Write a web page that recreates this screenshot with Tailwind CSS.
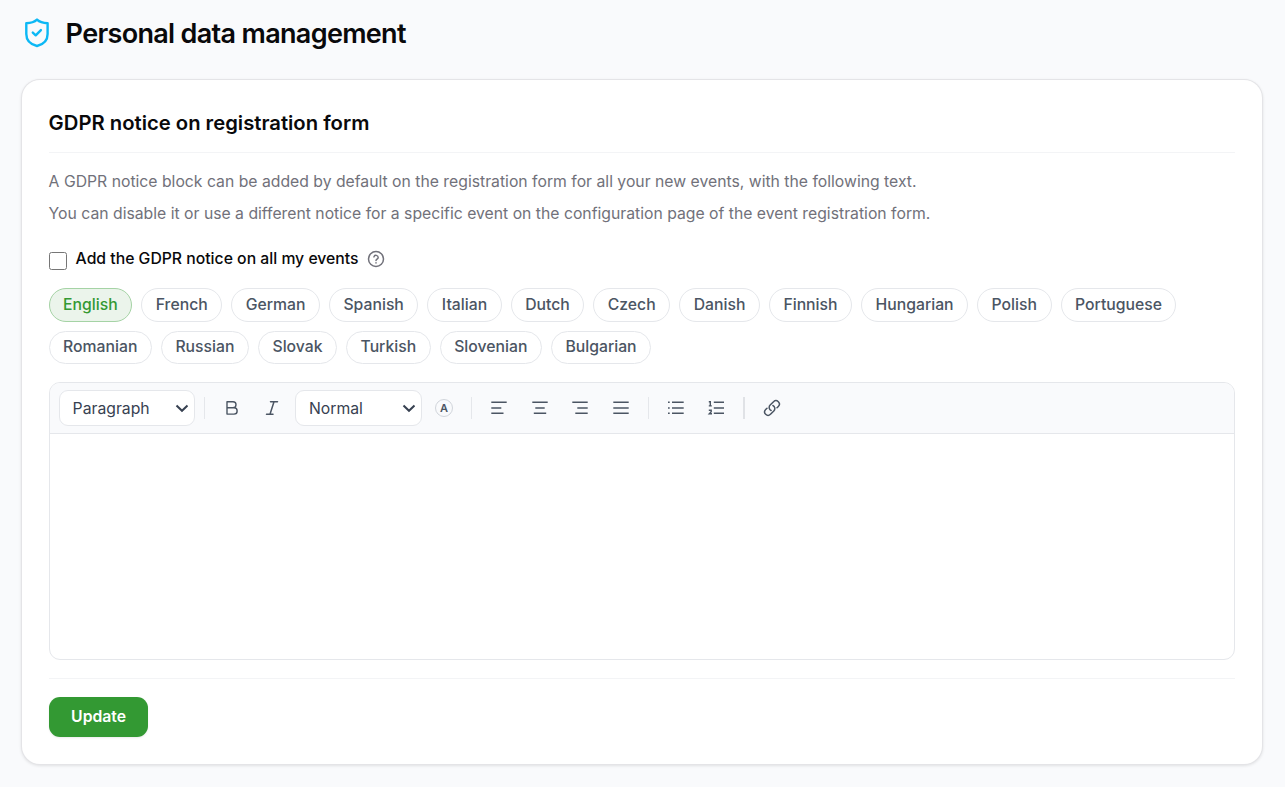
<!DOCTYPE html>
<html lang="en">
<head>
  <meta charset="UTF-8" />
  <meta name="viewport" content="width=device-width, initial-scale=1.0" />
  <title>Personal data management</title>
  <script src="https://cdn.jsdelivr.net/npm/@tailwindcss/browser@4"></script>
</head>
<body class="h-screen overflow-hidden bg-[#f9fafc] px-[21.6px] font-['Inter',sans-serif] text-[15.75px] text-[#09090b]">
  <header class="flex h-[80px] items-start pt-[15px]">
    <svg class="mt-px h-[33px] w-[30px] shrink-0" viewBox="0 0 30 33" fill="none" stroke="#0cb8f5" stroke-width="2.4" stroke-linecap="round" stroke-linejoin="round">
      <path d="M15 3.6C12.3 6.1 8.3 7.1 4.3 7.2V18c0 6.500 4.500 10.500 10.700 12 6.200-1.500 10.600-5.500 10.600-12V7.200c-4-.1-8-1.100-10.600-3.600Z" />
      <path d="m10.800 16.600 2.900 2.700 5.200-5.200" />
    </svg>
    <h1 class="ml-[14px] pt-px text-[27px] leading-[36px] font-semibold tracking-[-0.025em]">Personal data management</h1>
  </header>

  <main class="h-[684.4px] w-[1240.5px] rounded-[18px] bg-white px-[27px] pt-[27px] shadow-[0_0_0_1px_#e4e4e7,0_1px_3px_1px_rgba(0,0,0,0.1)]">
    <h2 class="h-[46px] border-b border-[#f3f4f6] text-[20.25px] leading-[32px] font-semibold">GDPR notice on registration form</h2>

    <div class="mt-[13px] leading-[32px] text-[#71717a]">
      <p>A GDPR notice block can be added by default on the registration form for all your new events, with the following text.</p>
      <p>You can disable it or use a different notice for a specific event on the configuration page of the event registration form.</p>
    </div>

    <label class="mt-[18px] flex h-[22px] items-center">
      <input type="checkbox" class="mt-[3px] h-[18px] w-[18px]" />
      <span class="ml-[9px] font-medium">Add the GDPR notice on all my events</span>
      <svg class="ml-[8px] h-[18px] w-[18px]" viewBox="0 0 18 18" fill="none" stroke="#71717a" stroke-width="1.5" stroke-linecap="round" stroke-linejoin="round">
        <circle cx="9" cy="9" r="7.5" />
        <path d="M6.900 6.900a2.200 2.200 0 0 1 4.300.6c0 1.500-2.200 1.800-2.200 3M9 12.800v.1" />
      </svg>
    </label>

    <div class="mt-[18px] flex flex-wrap gap-[9px] font-medium leading-[22.5px] text-[#4b5563] *:flex *:h-[33.5px] *:rounded-full *:border *:border-[#e5e7eb] *:px-[13.5px] *:pt-[4.5px]">
      <button class="border-[#a5d3a5]! bg-[#ebf4eb] text-[#339933]">English</button>
      <button>French</button>
      <button>German</button>
      <button>Spanish</button>
      <button>Italian</button>
      <button>Dutch</button>
      <button>Czech</button>
      <button>Danish</button>
      <button>Finnish</button>
      <button>Hungarian</button>
      <button>Polish</button>
      <button>Portuguese</button>
      <button>Romanian</button>
      <button>Russian</button>
      <button>Slovak</button>
      <button>Turkish</button>
      <button>Slovenian</button>
      <button>Bulgarian</button>
    </div>

    <!-- Editor -->
    <div class="mt-[18px] h-[278px] w-[1186px] overflow-hidden rounded-[11px] border border-[#e5e7eb] bg-white">
      <div class="flex h-[51px] items-center gap-[4.5px] border-b border-[#e5e7eb] bg-[#f9fafc] px-[9px] text-[#4b5563]">
        <button class="flex h-[36px] w-[136px] items-center justify-between rounded-[9px] border border-[#e5e7eb] bg-white pr-[5px] pl-[13px] text-[#374151]">
          <span class="pt-[1.5px]">Paragraph</span>
          <svg class="h-[14px] w-[14px]" viewBox="0 0 14 14" fill="none" stroke="#374151" stroke-width="2"><path d="m1.500 4.500 5.500 5.300 5.500-5.300" /></svg>
        </button>
        <span class="mx-[4.5px] h-[22px] w-px bg-[#e5e7eb]"></span>
        <button class="grid h-[36px] w-[36px] place-items-center">
          <svg class="h-[18px] w-[18px]" viewBox="0 0 18 18" fill="none" stroke="currentColor" stroke-width="1.4" stroke-linejoin="round"><path d="M4 2.800h6a3 3 0 0 1 0 6H4zM4 8.800h7a3.150 3.150 0 0 1 0 6.300H4z" /></svg>
        </button>
        <button class="grid h-[36px] w-[36px] place-items-center">
          <svg class="h-[18px] w-[18px]" viewBox="0 0 18 18" fill="none" stroke="currentColor" stroke-width="1.5" stroke-linecap="round"><path d="M7.500 2.800h7M3.500 15.200h6.500M11 2.800 7 15.200" /></svg>
        </button>
        <button class="flex h-[36px] w-[127px] items-center justify-between rounded-[9px] border border-[#e5e7eb] bg-white pr-[5px] pl-[13.4px] text-[#374151]">
          <span class="pt-[1.5px]">Normal</span>
          <svg class="h-[14px] w-[14px]" viewBox="0 0 14 14" fill="none" stroke="#374151" stroke-width="2"><path d="m1.500 4.500 5.500 5.300 5.500-5.300" /></svg>
        </button>
        <button class="grid h-[36px] w-[36px] place-items-center">
          <span class="grid h-[18px] w-[18px] place-items-center rounded-full border border-[#d1d5db] pt-px text-[11px] leading-none font-semibold">A</span>
        </button>
        <span class="mx-[4.5px] h-[22px] w-px bg-[#e5e7eb]"></span>
        <button class="grid h-[36px] w-[36px] place-items-center">
          <svg class="h-[18px] w-[18px]" viewBox="0 0 18 18" stroke="currentColor" stroke-width="1.5"><path d="M1.300 3.300h15.400M1.300 9h10M1.300 14.300h12.200" /></svg>
        </button>
        <button class="grid h-[36px] w-[36px] place-items-center">
          <svg class="h-[18px] w-[18px]" viewBox="0 0 18 18" stroke="currentColor" stroke-width="1.5"><path d="M1.300 3.300h15.400M4.300 9h9.400M2.800 14.300h12.400" /></svg>
        </button>
        <button class="grid h-[36px] w-[36px] place-items-center">
          <svg class="h-[18px] w-[18px]" viewBox="0 0 18 18" stroke="currentColor" stroke-width="1.5"><path d="M1.300 3.300h15.400M6.300 9h10.400M4.300 14.300h12.400" /></svg>
        </button>
        <button class="grid h-[36px] w-[36px] place-items-center">
          <svg class="h-[18px] w-[18px]" viewBox="0 0 18 18" stroke="currentColor" stroke-width="1.5"><path d="M1.300 3.300h15.400M1.300 9h15.400M1.300 14.300h15.400" /></svg>
        </button>
        <span class="mx-[4.5px] h-[22px] w-px bg-[#e5e7eb]"></span>
        <button class="grid h-[36px] w-[36px] place-items-center">
          <svg class="h-[18px] w-[18px]" viewBox="0 0 18 18" stroke="currentColor" stroke-width="1.5"><path d="M5 3.300h11.700M5 9h11.700M5 14.300h11.700M1 3.300h1.700M1 9h1.700M1 14.300h1.700" /></svg>
        </button>
        <button class="grid h-[36px] w-[36px] place-items-center">
          <svg class="h-[18px] w-[18px]" viewBox="0 0 18 18" fill="none" stroke="currentColor" stroke-width="1.5"><path d="M6.800 3.300H17M6.800 9H17M6.800 14.300H17" /><path stroke-width="1.4" d="M1.800 2.800h1.500v4M1.800 6.900h3M1.800 11.300h2.400v1.500l-1.900 2h2.700" /></svg>
        </button>
        <span class="mx-[4.5px] h-[22px] w-[1.5px] bg-[#e0e2e6]"></span>
        <button class="grid h-[36px] w-[36px] place-items-center">
          <svg class="h-[18px] w-[18px]" viewBox="0 0 24 24" fill="none" stroke="currentColor" stroke-width="2" stroke-linecap="round" stroke-linejoin="round"><path d="M13.190 8.688a4.500 4.500 0 0 1 1.242 7.244l-4.500 4.500a4.500 4.500 0 0 1-6.364-6.364l1.757-1.757m13.350-.622 1.757-1.757a4.500 4.500 0 0 0-6.364-6.364l-4.500 4.500a4.500 4.500 0 0 0 1.242 7.244" /></svg>
        </button>
      </div>
    </div>

    <div class="mt-[18px] border-t border-[#f3f4f6] pt-[18px]">
      <button class="h-[40px] w-[99px] rounded-[11px] bg-[#339933] pl-px font-semibold text-white shadow-[0_1px_2px_rgba(0,0,0,0.08)]">Update</button>
    </div>
  </main>
</body>
</html>
